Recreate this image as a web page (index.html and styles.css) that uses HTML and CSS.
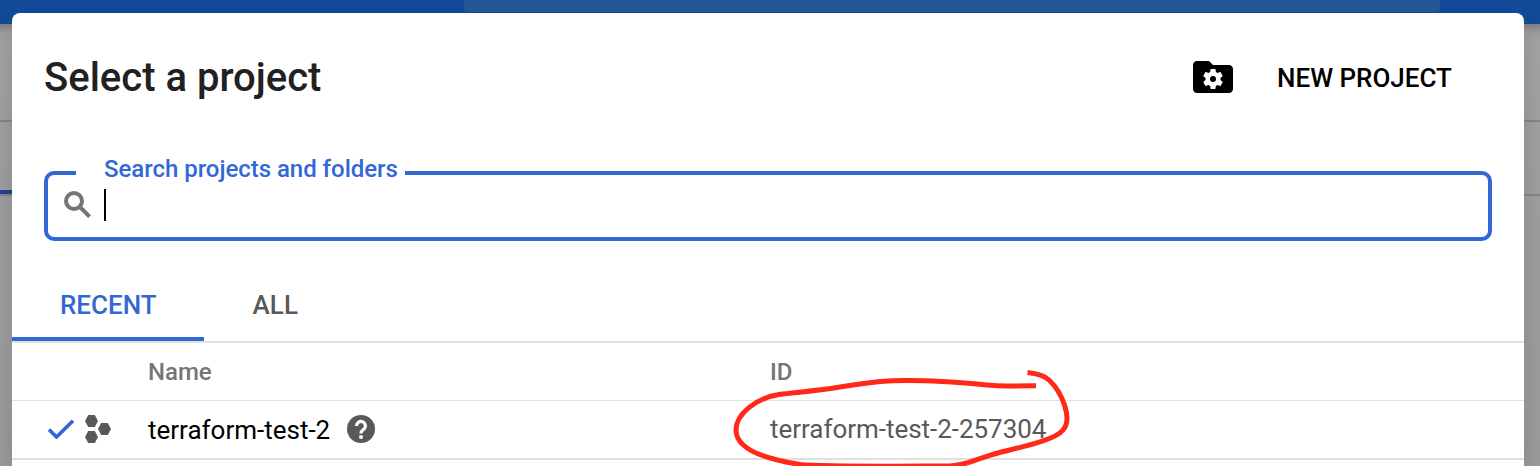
FILE: index.html
```html
<!DOCTYPE html>
<html lang="en">
<head>
<meta charset="utf-8">
<title>Select a project</title>
<link rel="stylesheet" href="styles.css">
</head>
<body>
<div class="page">
  <div class="topbar"><div class="topbar-search"></div></div>
  <div class="backdrop">
    <div class="backdrop-title"></div>
    <div class="backdrop-tabs"><div class="backdrop-active"></div></div>
  </div>
</div>
<main class="dialog">
  <header class="dialog-header">
    <h1 class="title">Select a project</h1>
    <div class="actions">
      <svg class="folder-icon" viewBox="0 0 40 32">
        <path d="M4 0h12l4 4h16c2.200 0 4 1.800 4 4v20c0 2.200-1.800 4-4 4H4c-2.200 0-4-1.800-4-4V4c0-2.200 1.800-4 4-4z"/>
        <path fill="#fff" fill-rule="evenodd" transform="translate(8 6)" d="M19.430 12.980c.040-.320.070-.640.070-.980s-.030-.660-.070-.980l2.110-1.650c.190-.150.240-.420.120-.640l-2-3.460c-.120-.220-.390-.300-.610-.220l-2.490 1c-.520-.400-1.080-.730-1.690-.980l-.380-2.650C14.460 2.180 14.250 2 14 2h-4c-.250 0-.460.180-.490.420l-.380 2.650c-.610.250-1.170.590-1.690.980l-2.490-1c-.230-.090-.490 0-.610.220l-2 3.460c-.130.220-.070.490.120.640l2.110 1.650c-.040.320-.070.650-.070.980s.030.660.070.980l-2.110 1.650c-.190.150-.240.420-.120.640l2 3.460c.120.220.390.300.610.220l2.490-1c.520.400 1.080.730 1.690.980l.380 2.650c.030.240.240.420.490.420h4c.250 0 .460-.180.490-.420l.380-2.650c.610-.250 1.170-.590 1.690-.980l2.490 1c.230.090.490 0 .610-.220l2-3.460c.120-.220.070-.490-.120-.640l-2.110-1.650zM12 15a3 3 0 1 1 0-6 3 3 0 0 1 0 6z"/>
      </svg>
      <button class="new-project">NEW PROJECT</button>
    </div>
  </header>
  <div class="search">
    <span class="search-label">Search projects and folders</span>
    <svg class="search-icon" viewBox="0 0 27 27"><circle cx="10" cy="10" r="8"/><path d="M15.500 15.500 25.600 25.600"/></svg>
    <span class="caret"></span>
  </div>
  <nav class="tabs">
    <div class="tab tab-active"><span class="tab-recent">RECENT</span></div>
    <div class="tab"><span class="tab-all">ALL</span></div>
  </nav>
  <section class="table">
    <div class="row head">
      <span></span><span class="head-name">Name</span><span class="head-id">ID</span>
    </div>
    <div class="row item">
      <div class="marks">
        <svg class="check" viewBox="0 0 28 20"><path d="M2 10.500 9.500 18 26 1.800"/></svg>
        <svg class="hexes" viewBox="0 0 26 28"><path d="M3.200 0h6.600L13 6l-3.200 6H3.200L0 6zM16.200 8h6.600L26 14l-3.200 6h-6.600L13 14zM3.200 16h6.600L13 22l-3.200 6H3.200L0 22z"/></svg>
      </div>
      <div class="name-cell">
        <span class="project-name">terraform-test-2</span>
        <svg class="help" viewBox="0 0 28 28"><circle cx="14" cy="14" r="14"/><path d="M9.600 11a4.400 4.400 0 1 1 7.700 2.800C15.700 15.200 14 15.800 14 18.600"/><rect x="12.200" y="20.300" width="3.600" height="3.400" rx="1"/></svg>
      </div>
      <span class="project-id">terraform-test-2-257304</span>
    </div>
  </section>
</main>
<svg class="annotation" viewBox="720 340 370 126"><path d="M1036 385.700C1017 386 1000 386.500 984 384.700C960 382.500 939 380.500 909 380.500C875 380 862 384 840 387C815 391 800 392 779 394.500C756 398 736 414 736 430C736 449 764 459 800 464.500C830 467 910 466 950 466C969 465 975 459 998 453C1025 446 1055 440 1063 430C1073 419 1062 392 1049 380C1044 375 1037 373.500 1027.500 372.500"/></svg>
</body>
</html>
```
FILE: styles.css
```css
* { box-sizing: border-box; }

body {
  margin: 0;
  width: 1540px;
  height: 466px;
  overflow: hidden;
  display: grid;
  grid-template-rows: 466px;
  font-family: Roboto, sans-serif;
  font-weight: 500;
  white-space: nowrap;
}

.page, .dialog { grid-area: 1 / 1; }

.page {
  height: 466px;
  background: #999;
}

.topbar {
  height: 24px;
  padding: 0 100px 0 464px;
  background: #114b98;
}

.topbar-search {
  height: 12px;
  border-radius: 0 0 4px 4px;
  background: #255798;
}

.backdrop {
  height: 442px;
  background: linear-gradient(#808080, #9c9c9c 8px, #a3a3a3 20px, #9e9e9e 160px, #9b9b9b);
}

.backdrop-title { height: 98px; border-bottom: 2px solid #858585; }

.backdrop-tabs {
  height: 74px;
  padding-top: 68px;
  border-bottom: 2px solid #858585;
}

.backdrop-active { width: 192px; height: 4px; background: #1f4591; }

.dialog {
  width: 1512px;
  height: 453px;
  margin: 13px 0 0 12px;
  border-radius: 8px 8px 0 0;
  background: #fff;
  box-shadow: 0 12px 24px rgba(0, 0, 0, .14);
}

.dialog-header {
  height: 158px;
  padding: 40px 72px 0 32px;
  display: flex;
  justify-content: space-between;
  align-items: flex-start;
}

.title {
  margin: 0;
  padding-top: 1px;
  color: #212121;
  font-size: 40px;
  font-weight: 500;
  line-height: 48px;
}

.actions { height: 48px; display: flex; align-items: center; gap: 44px; }
.folder-icon { width: 40px; height: 32px; }

.new-project {
  width: 175px;
  padding: 2px 0 0;
  border: 0;
  background: none;
  color: #000;
  font: 500 26px/32px Roboto, sans-serif;
  text-align: left;
}

.search {
  position: relative;
  height: 70px;
  margin: 0 32px;
  padding: 0 16px 2px;
  border: 4px solid #3367d6;
  border-radius: 10px;
  display: flex;
  align-items: center;
  gap: 13px;
}

/* The label interrupts the top border of the field. */
.search-label {
  position: absolute;
  left: 28px;
  top: -22px;
  width: 329px;
  padding-left: 28px;
  background: #fff;
  color: #3367d6;
  font-size: 24px;
  line-height: 32px;
  letter-spacing: -0.03px;
}

.search-icon {
  width: 27px;
  height: 27px;
  margin-bottom: 1px;
  fill: none;
  stroke: #757575;
  stroke-width: 4;
}

.caret { width: 2px; height: 32px; background: #000; }

.tabs {
  height: 102px;
  display: flex;
  align-items: flex-end;
  border-bottom: 2px solid #e0e0e0;
}

.tab {
  height: 72px;
  padding: 20px 48px 0;
  color: #595959;
  font-size: 26px;
  line-height: 32px;
}

.tab-all { padding-left: 0.6px; }

.tab-active {
  width: 192px;
  border-bottom: 4px solid #3367d6;
  color: #3367d6;
}

.row {
  display: grid;
  grid-template-columns: 136px 622px 1fr;
  align-items: center;
}

.head {
  height: 58px;
  border-bottom: 1px solid #e0e0e0;
  color: #757575;
  font-size: 24px;
}

.item {
  height: 59px;
  border-bottom: 2px solid #e0e0e0;
  font-size: 26px;
  font-weight: 400;
}

.marks { padding: 0 0 2px 35px; display: flex; align-items: center; gap: 10px; }
.check { width: 28px; height: 20px; fill: none; stroke: #3367d6; stroke-width: 3.600; }
.hexes { width: 26px; height: 28px; fill: #595959; }
.name-cell { display: flex; align-items: center; gap: 17px; }
.project-name { width: 182px; color: #000; }
.help { width: 28px; height: 28px; margin-bottom: 2px; fill: #595959; }
.help path { fill: none; stroke: #fff; stroke-width: 3.200; }
.help rect { fill: #fff; }
.project-id { padding-bottom: 2px; color: #595959; letter-spacing: -0.03px; }

.annotation {
  position: absolute;
  left: 720px;
  top: 340px;
  width: 370px;
  height: 126px;
  fill: none;
  stroke: #ff2819;
  stroke-width: 5;
}
```
